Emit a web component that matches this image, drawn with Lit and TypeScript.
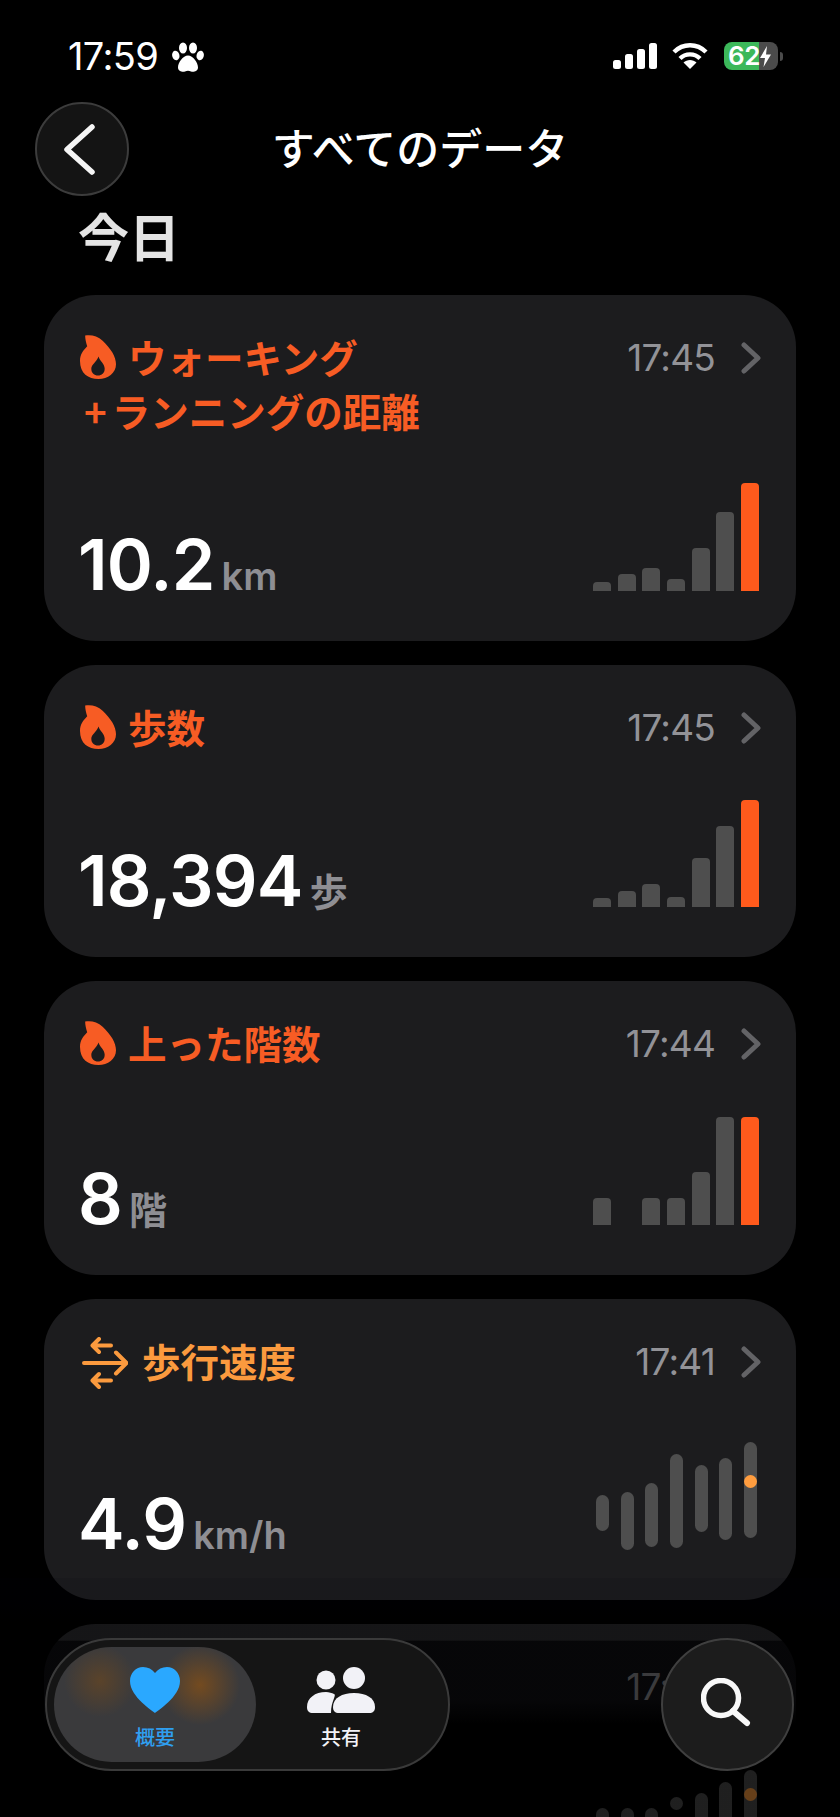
import { LitElement, html, css } from "lit";
import { customElement } from "lit/decorators.js";

const flame = html`<svg class="ic flame" viewBox="0 0 35 39" preserveAspectRatio="none"><path fill-rule="evenodd" fill="currentColor" d="M5 .5C10 -.5 17 .5 22 5C30 12 35 19 35 26C35 34 27 39 18 39C8 39 0 34 0 23C0 17 3 14 7 10C6 7 5 4 5 .5ZM18 19C19 23 24 25 24 30C24 34 21 36 17.5 36C14 36 11 34 11 30C11 26 16 24 18 19Z"/></svg>`;
const arrows = html`<svg class="ic arrows" viewBox="0 0 46 52" fill="none" stroke="currentColor" stroke-width="4" stroke-linecap="round" stroke-linejoin="round"><path d="M29 8.5H11M17 2L10.5 8.5L17 15M2 26H44M34 15.5L44.5 26L34 36.5M29 43.5H11M17 37L10.5 43.5L17 50"/></svg>`;

interface Card {
  h: number; title?: unknown; icon?: unknown; color?: string; time: string;
  value?: string; unit?: string; bars?: number[]; caps?: [number, number][]; dot?: number;
}
const cards: Card[] = [
  { h: 346, icon: flame, color: "orange", title: html`ウォーキング<br /><span class="plus">+</span>ランニングの距離`, time: "17:45", value: "10.2", unit: "km", bars: [9, 17, 23, 12, 43, 79, 108] },
  { h: 292, icon: flame, color: "orange", title: "歩数", time: "17:45", value: "18,394", unit: "歩", bars: [9, 16, 23, 10, 49, 81, 107] },
  { h: 294, icon: flame, color: "orange", title: "上った階数", time: "17:44", value: "8", unit: "階", bars: [27, 0, 27, 27, 53, 108, 108] },
  { h: 301, icon: arrows, color: "amber", title: "歩行速度", time: "17:41", value: "4.9", unit: "km/h", caps: [[53, 36], [50, 58], [41, 64], [12, 94], [23, 67], [16, 82], [0, 96]], dot: 33 },
  { h: 304, time: "17:40", caps: [[38, 60], [38, 60], [38, 60], [27, 13], [23, 60], [12, 70], [0, 80]], dot: 18 },
];

@customElement("app-root")
export class AppRoot extends LitElement {
  static styles = css`
    :host { display: block; position: relative; width: 840px; height: 1817px; overflow: hidden; background: #000; color: #fff;
      font-family: Inter, "Noto Sans CJK JP", sans-serif; }
    .status { display: flex; justify-content: space-between; align-items: center; height: 28px; padding: 42px 57px 0 68px; }
    .status-l, .status-r { display: flex; align-items: center; }
    .clock { font-size: 38px; font-weight: 400; letter-spacing: -0.6px; line-height: 28px; }
    .paw { width: 32px; height: 31px; margin: 2px 0 0 14px; }
    .signal { width: 44px; height: 26px; }
    .wifi { width: 36px; height: 26px; margin-left: 15px; }
    .battery { width: 54px; height: 28px; margin-left: 16px; border-radius: 8px;
      background: linear-gradient(90deg, #3cb85a 0 35px, #4b4b4b 35px); display: flex; align-items: center; padding-left: 4px; box-sizing: border-box;
      font-size: 26px; font-weight: 600; line-height: 28px; letter-spacing: -0.5px; }
    .bolt { width: 11px; height: 21px; flex: none; }
    .nub { width: 3px; height: 9px; margin-left: 2px; background: #4b4b4b; border-radius: 0 3px 3px 0; }
    .nav { display: grid; grid-template-columns: 94px 1fr 94px; align-items: center; padding: 32px 35px 0; }
    .back { width: 94px; height: 94px; box-sizing: border-box; border-radius: 50%; background: #141414; border: 2px solid #3c3c3c; display: flex; align-items: center; justify-content: center; }
    .back svg { width: 33px; height: 51px; margin-right: 6px; }
    .nav h1 { margin: 0; text-align: center; font-size: 43px; font-weight: 500; line-height: 50px; }
    .today { margin: 13px 0 0; padding-left: 78px; font-size: 51px; font-weight: 600; line-height: 60px; color: #e4e4e4; }
    .list { display: flex; flex-direction: column; gap: 24px; padding: 26px 44px 0; }
    .card { box-sizing: border-box; flex: none; border-radius: 52px; background: #1c1c1e; padding: 36px 37px 50px 36px; display: flex; flex-direction: column; justify-content: space-between; }
    .card.ghost { background: linear-gradient(#1c1c1e 0 17px, #101014 17px 76px, #000 100px); }
    .head { display: flex; justify-content: space-between; align-items: flex-start; }
    .title { font-size: 38.5px; font-weight: 700; line-height: 50px; font-family: "Noto Sans CJK JP", sans-serif; }
    .plus { margin: 0 5px 0 4px; }
    .orange { color: #f75c24; }
    .amber { color: #fb9a3e; }
    .ic { display: inline-block; vertical-align: middle; }
    .flame { width: 36px; height: 44px; margin: -6px 12px 6px 0; }
    .arrows { width: 46px; height: 52px; margin: -8px 14px 0 2px; }
    .meta { display: flex; align-items: center; height: 50px; margin-top: 2px; }
    .time { font-size: 37px; color: #929297; letter-spacing: -0.8px; line-height: 50px; }
    .chev { width: 20px; height: 32px; margin-left: 26px; margin-right: -2px; }
    .foot { display: flex; justify-content: space-between; align-items: flex-end; }
    .value { display: flex; align-items: baseline; gap: 7px; line-height: 1; margin: 0 0 -9px -2px; }
    .num { font-size: 70px; font-weight: 600; letter-spacing: -0.8px; }
    .unit { font-size: 38px; font-weight: 600; color: #8e8e93; }
    .chart { display: flex; align-items: flex-end; justify-content: space-between; width: 166px; height: 108px; margin-left: auto; }
    .chart.caps { align-items: flex-start; width: 161px; margin-right: 2px; }
    .bar { width: 18px; background: #4e4e4e; border-radius: 4px 4px 0 0; }
    .bar.on { background: #ff5a1c; }
    .cap { width: 13px; background: #4e4e4e; border-radius: 7px; position: relative; }
    .dot { position: absolute; left: 0; width: 13px; height: 13px; border-radius: 50%; background: #ff9d3f; }
    .fade { position: absolute; left: 0; right: 0; top: 1578px; bottom: 0; pointer-events: none;
      background: linear-gradient(rgba(0,0,16,.12) 0 23px, rgba(0,0,0,.24) 45px 62px, rgba(0,0,0,.6) 63px 240px); }
    .dock { position: absolute; left: 45px; right: 46px; top: 1638px; display: flex; justify-content: space-between; }
    .tabs { box-sizing: border-box; width: 405px; height: 133px; border-radius: 67px; background: #151515; border: 2px solid #3a3a3a; padding: 7px; display: flex; }
    .tab { flex: 1; display: flex; flex-direction: column; align-items: center; font-size: 20px; font-weight: 500; line-height: 24px; font-family: "Noto Sans CJK JP", sans-serif; }
    .tab.sel { flex: none; width: 202px; height: 115px; border-radius: 58px; color: #2f9ff0; overflow: hidden;
      background: radial-gradient(circle 36px at 46px 34px, rgba(130,78,20,.45), transparent), radial-gradient(circle 40px at 146px 38px, rgba(140,82,20,.7), transparent), #3a3a3c; }
    .tab svg { display: block; height: 46px; margin: 20px 0 12px; }
    .sel svg { width: 50px; }
    .ppl { width: 68px; }
    .people-tab { color: #f2f2f7; padding-right: 15px; }
    .search { box-sizing: border-box; width: 133px; height: 133px; border-radius: 50%; background: #1c1c1c; border: 2px solid #3f3f3f; display: flex; align-items: center; justify-content: center; }
    .search svg { width: 54px; height: 54px; }
  `;

  private chart(c: Card) {
    if (c.bars) return html`<div class="chart">${c.bars.map((h, i) => html`<div class="bar ${i === 6 ? "on" : ""}" style="height:${h}px"></div>`)}</div>`;
    return html`<div class="chart caps">${c.caps!.map((p, i) => html`<div class="cap" style="margin-top:${p[0]}px;height:${p[1]}px">${i === 6 ? html`<div class="dot" style="top:${c.dot}px"></div>` : ""}</div>`)}</div>`;
  }

  render() {
    return html`
      <div class="status">
        <div class="status-l">
          <span class="clock">17:59</span>
          <svg class="paw" viewBox="0 0 32 30" fill="#fff"><ellipse cx="3.8" cy="13" rx="3.6" ry="4.8" transform="rotate(-15 3.8 13)"/><ellipse cx="11" cy="5.5" rx="4" ry="5.5"/><ellipse cx="21" cy="5.5" rx="4" ry="5.5"/><ellipse cx="28.2" cy="13" rx="3.6" ry="4.8" transform="rotate(15 28.2 13)"/><path d="M16 13C21 13 26 20 26 25C26 29 21 30 19 29C17 28 15 28 13 29C11 30 6 29 6 25C6 20 11 13 16 13Z"/></svg>
        </div>
        <div class="status-r">
          <svg class="signal" viewBox="0 0 44 26" fill="#fff"><rect x="0" y="17" width="8" height="9" rx="2.5"/><rect x="12" y="11" width="8" height="15" rx="2.5"/><rect x="24" y="6" width="8" height="20" rx="2.5"/><rect x="36" y="0" width="8" height="26" rx="2.5"/></svg>
          <svg class="wifi" viewBox="0 0 36 26" fill="none" stroke="#fff" stroke-width="4.4"><path d="M2 9C11 0 25 0 34 9"/><path d="M8 15.5C13.5 10 22.5 10 28 15.5"/><path fill="#fff" stroke="none" d="M18 26L11.5 19.5C15 16 21 16 24.5 19.5Z"/></svg>
          <div class="battery"><span>62</span><svg class="bolt" viewBox="0 0 11 21" fill="#fff"><path d="M7 0L0 12H5L3.5 21L11 8.5H6Z"/></svg></div>
          <div class="nub"></div>
        </div>
      </div>
      <div class="nav">
        <div class="back"><svg viewBox="0 0 33 51" fill="none" stroke="#f5f5f5" stroke-width="5.5" stroke-linecap="round" stroke-linejoin="round"><path d="M29 3L4 25.5L29 48"/></svg></div>
        <h1>すべてのデータ</h1>
        <div></div>
      </div>
      <h2 class="today">今日</h2>
      <div class="list">
        ${cards.map((c) => html`
          <div class="card ${c.title ? "" : "ghost"}" style="height:${c.h}px">
            <div class="head">
              <div class="title ${c.color ?? ""}">${c.icon ?? ""}${c.title ?? ""}</div>
              <div class="meta"><span class="time">${c.time}</span>
                <svg class="chev" viewBox="0 0 20 32" fill="none" stroke="#636366" stroke-width="5" stroke-linecap="round" stroke-linejoin="round"><path d="M3 3L17 16L3 29"/></svg></div>
            </div>
            <div class="foot">
              ${c.value ? html`<div class="value"><span class="num">${c.value}</span><span class="unit">${c.unit}</span></div>` : ""}
              ${this.chart(c)}
            </div>
          </div>`)}
      </div>
      <div class="fade"></div>
      <div class="dock">
        <div class="tabs">
          <div class="tab sel">
            <svg viewBox="0 0 50 46" fill="#2aa8ff"><path d="M25 46C23 44 0 30 0 14C0 6 6 0 13 0C18 0 22 2 25 6C28 2 32 0 37 0C44 0 50 6 50 14C50 30 27 44 25 46Z"/></svg>
            概要
          </div>
          <div class="tab people-tab">
            <svg class="ppl" viewBox="0 0 68 46" fill="currentColor"><circle cx="19" cy="13" r="9.5"/><circle cx="47" cy="11" r="11"/><path d="M0 40C0 31 8 25 19 25C22 25 25 26 27 27C30 28 24 34 24 46H6C2 46 0 44 0 40Z"/><path d="M26 40C26 31 35 26 47 26C59 26 68 31 68 40C68 44 66 46 62 46H32C28 46 26 44 26 40Z"/></svg>
            共有
          </div>
        </div>
        <div class="search"><svg viewBox="0 0 54 54" fill="none" stroke="#f8f8f8" stroke-width="5.5" stroke-linecap="round"><circle cx="20" cy="20" r="17.5"/><path stroke-width="6" d="M32 33L46 45"/></svg></div>
      </div>
    `;
  }
}
